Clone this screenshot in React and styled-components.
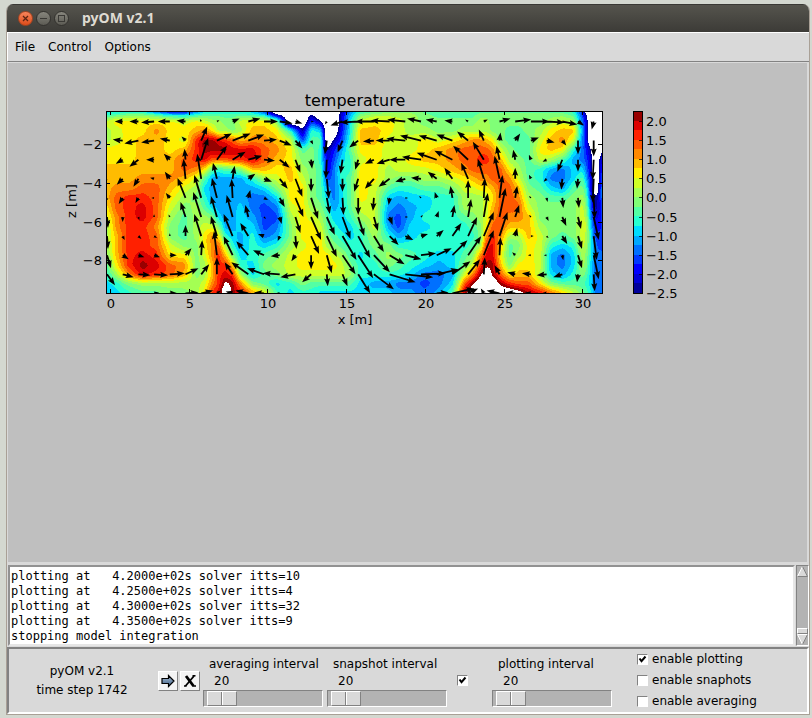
import React, { useState } from "react";
import styled, { createGlobalStyle } from "styled-components";

const GlobalStyle = createGlobalStyle`
  * {
    box-sizing: border-box;
  }

  body {
    margin: 0;
    background: #d4d8d0;
    font-family: "DejaVu Sans", sans-serif;
    font-size: 12px;
    color: #000;
  }
`;

const Desktop = styled.div`
  display: flex;
  min-height: 100vh;
  padding: 4px 2px 3px 6px;
`;

const Window = styled.main`
  flex: 1;
  min-width: 0;
  display: flex;
  flex-direction: column;
  border: 1px solid #a9a096;
  border-top: 0;
  border-radius: 7px 7px 0 0;
  overflow: hidden;
  background: #d9d9d9;
`;

const TitleBar = styled.header`
  display: flex;
  align-items: center;
  gap: 3px;
  height: 28px;
  padding-left: 11px;
  border-top: 1px solid #3a3935;
  background: linear-gradient(#55544d, #3c3b37);
`;

const TitleButton = styled.button`
  width: 15px;
  height: 15px;
  padding: 0;
  border: 1px solid ${(props) => (props.$close ? "#a8441f" : "#33322e")};
  border-radius: 50%;
  background: ${(props) =>
    props.$close
      ? "linear-gradient(#f6855c, #dd4c1a)"
      : "linear-gradient(#87867d, #5c5b54)"};

  svg {
    display: block;
  }
`;

const WindowTitle = styled.h1`
  margin: 0 0 0 10px;
  padding-bottom: 2px;
  font-family: "Noto Sans", sans-serif;
  font-size: 14px;
  font-weight: 700;
  line-height: 20px;
  color: #dfdbd2;
`;

const MenuBar = styled.nav`
  display: flex;
  gap: 13px;
  height: 30px;
  padding: 0 7px 1px;
  border-top: 1px solid #fff;
  border-left: 1px solid #fff;
  border-bottom: 1px solid #828282;
`;

const MenuButton = styled.button`
  padding: 0;
  border: 0;
  background: none;
  font: inherit;
`;

const Canvas = styled.section`
  flex: 1;
  padding: 27px 0 0 52px;
  border: 1px solid #d9d9d9;
  border-width: 1px 2px 0 1px;
  background: #bfbfbf;
  overflow: hidden;

  svg {
    display: block;
  }
`;

const LogRow = styled.section`
  display: flex;
  padding: 2px 0 1px 1px;
  border-top: 1px solid #d9d9d9;
`;

const Log = styled.textarea`
  flex: 1;
  min-width: 0;
  height: 81px;
  padding: 2px 1px;
  border: 2px solid;
  border-color: #929292 #e6e6e6 #e6e6e6 #929292;
  background: #fff;
  color: #000;
  font-family: "DejaVu Sans Mono", monospace;
  font-size: 12px;
  line-height: 15px;
  resize: none;
  outline: none;
  overflow: hidden;
`;

const ScrollBar = styled.div`
  display: flex;
  flex-direction: column;
  width: 13px;
  margin-left: 1px;
  border: 1px solid;
  border-color: #828282 #fff #fff #828282;
  background: #b3b3b3;
`;

const ScrollArrow = styled.button`
  height: 11px;
  padding: 0;
  border: 0;
  background: none;

  svg {
    display: block;
  }
`;

const ScrollTrough = styled.div`
  flex: 1;
  display: flex;
  align-items: flex-end;
`;

const ScrollThumb = styled.div`
  flex: 1;
  height: 6px;
  border: 1px solid;
  border-color: #fff #828282 #828282 #fff;
  background: #d9d9d9;
`;

const ControlPanel = styled.section`
  display: flex;
  align-items: center;
  height: 67px;
  border: 2px solid;
  border-color: #828282 #fff #fff #828282;
`;

const Status = styled.div`
  width: 149px;
  padding-right: 3px;
  line-height: 19px;
  text-align: center;

  p {
    margin: 0;
  }
`;

const ToolButtons = styled.div`
  display: flex;
  gap: 2px;
  margin-right: 3px;
`;

const ToolButton = styled.button`
  width: 20px;
  height: 20px;
  padding: 0;
  border: 1px solid;
  border-color: #fff #828282 #828282 #fff;
  background: #f4f4f4;

  svg {
    display: block;
    margin: auto;
  }
`;

const Scale = styled.label`
  display: flex;
  flex-direction: column;
  width: 120px;
  margin-right: ${(props) => props.$gap || 0}px;
  padding-top: 2px;
  line-height: 17px;
`;

const ScaleLabel = styled.span`
  padding-left: 6px;
`;

const ScaleValue = styled.output`
  padding-left: 11px;
`;

const Slider = styled.input`
  appearance: none;
  width: 120px;
  height: 17px;
  margin: 0;
  padding: 0 1px;
  border: 1px solid;
  border-color: #828282 #fff #fff #828282;
  background: #b3b3b3;

  &::-webkit-slider-thumb {
    appearance: none;
    width: 30px;
    height: 15px;
    border: 1px solid;
    border-color: #fff #828282 #828282 #fff;
    background: linear-gradient(
      90deg,
      #d9d9d9 13px,
      #828282 13px 14px,
      #fff 14px 15px,
      #d9d9d9 15px
    );
  }
`;

const Tick = styled.input`
  appearance: none;
  flex: none;
  width: 11px;
  height: 11px;
  margin: 0;
  border: 1px solid;
  border-color: #828282 #fff #fff #828282;
  background: #fff;

  &:checked {
    background: #fff
      url("data:image/svg+xml,%3Csvg xmlns='http://www.w3.org/2000/svg' viewBox='0 0 9 9'%3E%3Cpath d='M1.5 3.5l2 2.6 4-4.6' fill='none' stroke='%23000' stroke-width='2'/%3E%3C/svg%3E");
  }
`;

const LoneTick = styled(Tick)`
  margin: 0 24px 0 10px;
`;

const Options = styled.div`
  display: flex;
  flex-direction: column;
  margin-left: 25px;
`;

const Option = styled.label`
  display: flex;
  align-items: center;
  gap: 4px;
  line-height: 21px;
`;

const ChartText = styled.text`
  font-family: "DejaVu Sans", sans-serif;
  font-size: ${(props) => props.$size || 13}px;
`;

const LEVEL_COLORS = [
  "#00009b", "#0000d6", "#0000ff", "#0038ff", "#0070ff", "#00a8ff", "#00dcfe",
  "#27ffd0", "#53ffa4", "#80ff77", "#a4ff53", "#d0ff27", "#fff000", "#ffbc00",
  "#ff8800", "#ff5800", "#ff2000", "#dc0000", "#980000",
];

const PLOT_W = 496;
const PLOT_H = 182;

// Depth of each sample in a column, measured from the top of the axes.
const SAMPLE_Y = [
  0, 3, 10, 19, 29, 38, 48, 58, 67, 77, 86, 96, 106, 115, 125, 134, 144, 154,
  163, 172, 182,
];

// One entry per sampled column: x, then colour levels from surface to bottom.
// "a" is the coldest level, "_" is below the scale and "t" upwards is above it.
const TEMPERATURE = [
  [0, "ghlkkmmnnnnmlkkkjihgg"],
  [10, "gimllmmnnoppoonnnmkhg"],
  [22, "gjmmmmmnnoqqqqqqqqojh"],
  [36, "gjmmnnnnopqrrqqqrsrki"],
  [50, "dimonnnnoppppoppqrqki"],
  [64, "bgmmmmnnonmlkjjlmppkj"],
  [78, "bglmlnppnlkjiiijmonkj"],
  [90, "ehmnqqqolkjkkkkjjjjkk"],
  [98, "gilossrmighiklmmlkklm"],
  [106, "gikmsspifffgjlooonnoq"],
  [112, "gikkrsphffffgjmpqqqqr"],
  [119, "gijkqspiffffffhknqrtv"],
  [126, "gijjprqiffffffghjnqss"],
  [134, "gilknrqjfffgggffghkor"],
  [146, "ghmnorrnhfeefghhhggjo"],
  [158, "dgmnoppnkgedddegijiim"],
  [170, "_akmnonmljgedefhjkjgi"],
  [184, "___hlmmnnmmlkjjklllhg"],
  [196, "___adijklmmmmmmlmmljh"],
  [205, "_adhijjjjjjklmmmmmlih"],
  [214, "__agihhiiiijklmmmmlig"],
  [221, "_____abbdfghiijkmmlig"],
  [227, "____acdeeeefghijlmlig"],
  [235, "abbcdfghhggggghikllig"],
  [243, "efgghihhiiiihgghijkig"],
  [254, "hjlnnmlmmmmlkihhghhgg"],
  [268, "ikmnnmmmmlllllkjihhfg"],
  [282, "jkmmlllkkigfefhjkjhfg"],
  [292, "jklllllljhfeddfhjihef"],
  [304, "jkkkllmljhgffgghihgef"],
  [318, "ijjkmmnlkigghghhhgede"],
  [332, "iijjlnnmkihhhhhhgfeef"],
  [346, "iijjmoonljhhhhhhggfgi"],
  [358, "iijknppomlkkihhhijlps"],
  [366, "iijkopppnlkkjihijlosv"],
  [374, "ijkkopqpomkkkjjkoqsvv"],
  [380, "ijkknpqpomlllmoqrsvvv"],
  [386, "ijjjmopppnmnopqrrssvv"],
  [394, "ijjjjlnppppppponmnpsv"],
  [403, "ijjiijkmoppponkiijmqv"],
  [412, "ijjiiijklnoponkjkmnpu"],
  [422, "ijjjiiiiijklnnnmmmnps"],
  [434, "ijjklmlhhijjjkllllkmr"],
  [445, "ijkmnnkfegijjjjhffgjp"],
  [456, "ijlnomieefijjjigeefin"],
  [467, "hiknlhfggijjjjjhgghil"],
  [476, "cdefeeegijklllllkkjij"],
  [480, "_abbccdefhijklkkjjihi"],
  [484, "_____abbccdefghhhgggh"],
  [489, "__________aabcdeeeeee"],
  [493, "______aaabbbccddeeeee"],
  [496, "bbbbbbcegggeddddeeeef"],
];

// Velocity vectors, "dx,dy" per grid point, one string per depth.
const VELOCITY = [
  "-7,0 -8,0 -9,0 -13,1 -12,0 -9,-1 -1,-2 2,-1 7,-3 12,-3 14,0 13,2 7,2 1,0 -2,3 -12,4 -18,1 -19,0 -19,-1 -18,-2 -14,-3 -11,-2 -8,-1 -3,-2 4,-2 11,-3 16,-2 19,0 18,1 15,3 6,4 -2,8",
  "-7,0 -10,-1 -14,3 -13,2 -10,-2 -4,-4 6,-14 15,-7 18,-7 16,-6 13,-1 12,5 7,8 2,4 -2,14 -5,12 -9,7 -11,1 -14,0 -19,-2 -21,-5 -18,-5 -16,-6 -11,-9 -5,-11 1,-8 5,-7 8,-3 8,2 4,5 0,14 0,16",
  "-4,1 -7,4 -9,7 -8,0 -6,-6 -1,-11 7,-22 10,-14 13,-8 14,-4 11,1 10,8 5,13 1,9 -1,19 -2,14 -3,10 -9,4 -13,4 -16,0 -19,-3 -20,-7 -18,-9 -15,-14 -11,-18 -3,-14 -2,-10 -2,-5 -4,2 -5,12 0,12 -1,20",
  "-3,2 -6,6 -5,8 -4,-1 -5,-7 -2,-20 -4,-25 -4,-16 2,-13 7,-5 8,3 8,10 7,18 0,13 2,20 0,13 -4,13 -9,10 -11,8 -10,3 -10,-1 -9,-7 -8,-11 -7,-16 -6,-20 -5,-23 0,-11 -2,-4 -3,3 -1,11 -1,10 -1,24",
  "-2,4 -4,6 -3,5 -1,0 -4,-5 -8,-20 -7,-23 -5,-20 -1,-19 2,-8 4,2 5,9 8,19 7,21 3,16 1,17 0,17 -1,13 -1,7 1,0 -1,-1 -2,-6 -2,-12 0,-18 1,-20 3,-23 2,-12 -1,-1 1,4 1,10 1,10 1,21",
  "1,11 0,5 1,3 0,-1 -1,-2 -5,-15 -8,-25 -6,-21 -6,-22 -3,-12 1,1 2,7 5,16 10,23 8,18 8,22 6,19 4,14 3,8 1,0 1,-1 2,-6 2,-12 3,-18 4,-24 6,-29 4,-12 -1,-1 2,4 4,9 3,12 5,23",
  "1,13 2,4 3,3 3,2 0,-1 0,-11 -7,-22 -6,-20 -9,-22 -8,-13 -6,-2 -2,5 1,13 8,18 10,21 14,24 12,22 10,16 9,9 8,4 7,-2 7,-6 9,-13 9,-19 10,-24 8,-24 2,-8 1,0 2,2 5,8 4,13 3,24",
  "4,13 6,4 6,2 6,2 7,0 6,-7 1,-15 -3,-24 -9,-19 -12,-14 -11,-5 -9,1 -4,6 0,14 5,18 13,19 15,23 16,17 15,9 16,4 15,-2 15,-7 15,-15 13,-19 10,-25 1,-18 -3,-3 -3,0 -1,0 1,5 4,13 5,24",
  "8,11 11,3 12,1 14,1 15,-1 13,-6 8,-10 0,-17 -8,-12 -17,-12 -17,-6 -17,-1 -15,3 -9,8 1,12 5,12 12,19 20,15 26,8 28,3 25,-1 22,-5 18,-13 12,-15 1,-17 -5,-9 -8,-2 -9,-1 -10,1 -9,3 -1,8 1,17",
  "0,0 0,0 0,0 5,-1 8,0 13,-1 12,-3 4,-3 -7,-2 -13,-3 -10,-1 -4,0 0,0 0,0 0,0 0,0 0,0 0,0 0,0 0,0 3,0 12,-1 22,-5 10,-5 -3,-5 -13,-3 -10,-1 -6,-1 -5,0 0,0 0,0 0,0",
];

const X_TICKS = [
  [4, "0"],
  [83, "5"],
  [161, "10"],
  [240, "15"],
  [319, "20"],
  [398, "25"],
  [476, "30"],
];

const Z_TICKS = [
  [33, "−2"],
  [72, "−4"],
  [111, "−6"],
  [149, "−8"],
];

const BAR_LABELS = [
  "2.0", "1.5", "1.0", "0.5", "0.0", "−0.5", "−1.0", "−1.5", "−2.0", "−2.5",
];

function levelOf(letter) {
  return letter === "_" ? -3.5 : letter.charCodeAt(0) - 96.5;
}

function interpolate(stops, values, at) {
  let i = 1;
  while (i < stops.length - 1 && stops[i] < at) i++;
  const t = (at - stops[i - 1]) / (stops[i] - stops[i - 1]);
  return values[i - 1] * (1 - t) + values[i] * t;
}

function smooth(line, radius) {
  return line.map((_, i) => {
    let sum = 0;
    let weight = 0;
    for (let k = -radius; k <= radius; k++) {
      const j = Math.min(line.length - 1, Math.max(0, i + k));
      const w = radius + 1 - Math.abs(k);
      sum += line[j] * w;
      weight += w;
    }
    return sum / weight;
  });
}

// Fills every level with one path made of horizontal runs.
function buildContours() {
  const stops = TEMPERATURE.map((column) => column[0]);
  const columns = TEMPERATURE.map(([, letters]) => {
    const levels = letters.split("").map(levelOf);
    const line = Array.from({ length: PLOT_H }, (_, y) =>
      interpolate(SAMPLE_Y, levels, y)
    );
    return smooth(line, 3);
  });
  const paths = LEVEL_COLORS.map(() => "");
  for (let y = 0; y < PLOT_H; y++) {
    const values = columns.map((column) => column[y]);
    const row = smooth(
      Array.from({ length: PLOT_W }, (_, x) => interpolate(stops, values, x)),
      2
    ).map(Math.floor);
    let start = 0;
    for (let x = 1; x <= PLOT_W; x++) {
      if (row[x] !== row[start]) {
        if (paths[row[start]] !== undefined) {
          paths[row[start]] += `M${start} ${y}H${x}V${y + 1}H${start}Z`;
        }
        start = x;
      }
    }
  }
  return paths;
}

function arrowPath(x, y, dx, dy) {
  const length = Math.hypot(dx, dy);
  if (length < 0.5) return "";
  const s = Math.min(1, Math.max(0.35, length / 8));
  const ux = dx / length;
  const uy = dy / length;
  const tip = Math.max(length, 8 * s);
  const points = [
    [0, 0.9],
    [tip - 7 * s, 0.9],
    [tip - 8 * s, 3],
    [tip, 0],
    [tip - 8 * s, -3],
    [tip - 7 * s, -0.9],
    [0, -0.9],
  ].map(([along, across]) => {
    const a = across * s;
    return `${(x + along * ux - a * uy).toFixed(1)} ${(
      y + along * uy + a * ux
    ).toFixed(1)}`;
  });
  return `M${points.join("L")}Z`;
}

const contours = buildContours();

const arrows = VELOCITY.map((row, j) =>
  row
    .split(" ")
    .map((pair, i) => {
      const [dx, dy] = pair.split(",").map(Number);
      return arrowPath(1 + i * 15.7, 10.5 + j * 19.1, dx, dy);
    })
    .join("")
).join("");

function TemperaturePlot() {
  const band = PLOT_H / LEVEL_COLORS.length;
  return (
    <svg width="630" height="240" role="img" aria-label="temperature">
      <defs>
        <clipPath id="axes">
          <rect width={PLOT_W} height={PLOT_H} />
        </clipPath>
      </defs>
      <ChartText x="295" y="16" $size={16} textAnchor="middle">
        temperature
      </ChartText>
      <ChartText x="295" y="234" textAnchor="middle">
        x [m]
      </ChartText>
      <ChartText transform="translate(16 111) rotate(-90)" textAnchor="middle">
        z [m]
      </ChartText>
      <g transform="translate(46 21)">
        <g clipPath="url(#axes)">
          <rect width={PLOT_W} height={PLOT_H} fill="#fff" />
          <g shapeRendering="crispEdges">
            {contours.map((d, i) => (
              <path key={i} d={d} fill={LEVEL_COLORS[i]} />
            ))}
          </g>
          <path d={arrows} />
        </g>
        <rect
          x="0.5"
          y="0.5"
          width={PLOT_W}
          height={PLOT_H}
          fill="none"
          stroke="#000"
        />
        {X_TICKS.map(([x, label]) => (
          <g key={label}>
            <path d={`M${x}.5 0v4M${x}.5 182v-4`} stroke="#000" />
            <ChartText x={x + 1} y="197" textAnchor="middle">
              {label}
            </ChartText>
          </g>
        ))}
        {Z_TICKS.map(([y, label]) => (
          <g key={label}>
            <path d={`M0 ${y}.5h4M496 ${y}.5h-4`} stroke="#000" />
            <ChartText x="-4" y={y + 5} textAnchor="end">
              {label}
            </ChartText>
          </g>
        ))}
      </g>
      <g transform="translate(573 21)">
        <g shapeRendering="crispEdges">
          {LEVEL_COLORS.map((color, i) => (
            <rect
              key={color}
              y={PLOT_H - (i + 1) * band}
              width="10"
              height={band}
              fill={color}
            />
          ))}
        </g>
        <rect
          x="0.5"
          y="0.5"
          width="9"
          height={PLOT_H}
          fill="none"
          stroke="#000"
        />
        {BAR_LABELS.map((label, i) => {
          const y = Math.round(10 + i * 19.1);
          return (
            <g key={label}>
              <path d={`M6 ${y}.5h4`} stroke="#000" strokeOpacity="0.7" />
              <ChartText x="13" y={y + 5}>
                {label}
              </ChartText>
            </g>
          );
        })}
      </g>
    </svg>
  );
}

function IntervalScale({ label, gap }) {
  const [value, setValue] = useState(20);
  return (
    <Scale $gap={gap}>
      <ScaleLabel>{label}</ScaleLabel>
      <ScaleValue>{value}</ScaleValue>
      <Slider
        type="range"
        min="1"
        max="1000"
        value={value}
        onChange={(e) => setValue(Number(e.target.value))}
      />
    </Scale>
  );
}

const LOG_TEXT = `plotting at   4.2000e+02s solver itts=10
plotting at   4.2500e+02s solver itts=4
plotting at   4.3000e+02s solver itts=32
plotting at   4.3500e+02s solver itts=9
stopping model integration`;

function App() {
  return (
    <Desktop>
      <GlobalStyle />
      <Window>
        <TitleBar>
          <TitleButton $close aria-label="Close">
            <svg width="13" height="13" stroke="#5a2412" strokeWidth="1.3">
              <path d="M4 4l5 5M9 4l-5 5" />
            </svg>
          </TitleButton>
          <TitleButton aria-label="Minimize">
            <svg width="13" height="13" stroke="#3a3935">
              <path d="M3 6.5h7" />
            </svg>
          </TitleButton>
          <TitleButton aria-label="Maximize">
            <svg width="13" height="13" stroke="#3a3935" fill="none">
              <rect x="3.5" y="3.5" width="6" height="6" />
            </svg>
          </TitleButton>
          <WindowTitle>pyOM v2.1</WindowTitle>
        </TitleBar>

        <MenuBar>
          <MenuButton>File</MenuButton>
          <MenuButton>Control</MenuButton>
          <MenuButton>Options</MenuButton>
        </MenuBar>

        <Canvas>
          <TemperaturePlot />
        </Canvas>

        <LogRow>
          <Log readOnly aria-label="Log" value={LOG_TEXT} />
          <ScrollBar>
            <ScrollArrow aria-label="Scroll up">
              <svg width="11" height="11">
                <path d="M5.5 0.5L10.5 10.5H0.5Z" fill="#d9d9d9" />
                <path d="M0.5 10.5L5.5 0.5" stroke="#fff" />
                <path d="M5.5 0.5L10.5 10.5H0.5" fill="none" stroke="#828282" />
              </svg>
            </ScrollArrow>
            <ScrollTrough>
              <ScrollThumb />
            </ScrollTrough>
            <ScrollArrow aria-label="Scroll down">
              <svg width="11" height="11">
                <path d="M0.5 0.5H10.5L5.5 10.5Z" fill="#d9d9d9" />
                <path d="M5.5 10.5L0.5 0.5H10.5" fill="none" stroke="#fff" />
                <path d="M10.5 0.5L5.5 10.5" stroke="#828282" />
              </svg>
            </ScrollArrow>
          </ScrollBar>
        </LogRow>

        <ControlPanel>
          <Status>
            <p>pyOM v2.1</p>
            <p>time step 1742</p>
          </Status>
          <ToolButtons>
            <ToolButton aria-label="Run">
              <svg width="14" height="14">
                <defs>
                  <linearGradient id="steel" x2="0" y2="1">
                    <stop stopColor="#a9bdd3" />
                    <stop offset="1" stopColor="#3d5f86" />
                  </linearGradient>
                </defs>
                <path
                  d="M1 4.5H7.5V1.5L13 7L7.5 12.5V9.5H1Z"
                  fill="url(#steel)"
                  stroke="#000"
                  strokeWidth="1.2"
                />
              </svg>
            </ToolButton>
            <ToolButton aria-label="Stop">
              <svg width="14" height="14" stroke="#000" fill="none">
                <path d="M3 2L10.5 12" strokeWidth="2.8" />
                <path d="M11 2L2.5 12" strokeWidth="1.8" />
                <path d="M9.5 1.8h3M9.5 12h3.5M1 12h2.5" strokeWidth="1.4" />
              </svg>
            </ToolButton>
          </ToolButtons>
          <IntervalScale label="averaging interval" gap={4} />
          <IntervalScale label="snapshot interval" />
          <LoneTick type="checkbox" defaultChecked aria-label="snapshot" />
          <IntervalScale label="plotting interval" />
          <Options>
            <Option>
              <Tick type="checkbox" defaultChecked />
              enable plotting
            </Option>
            <Option>
              <Tick type="checkbox" />
              enable snaphots
            </Option>
            <Option>
              <Tick type="checkbox" />
              enable averaging
            </Option>
          </Options>
        </ControlPanel>
      </Window>
    </Desktop>
  );
}

export default App;
